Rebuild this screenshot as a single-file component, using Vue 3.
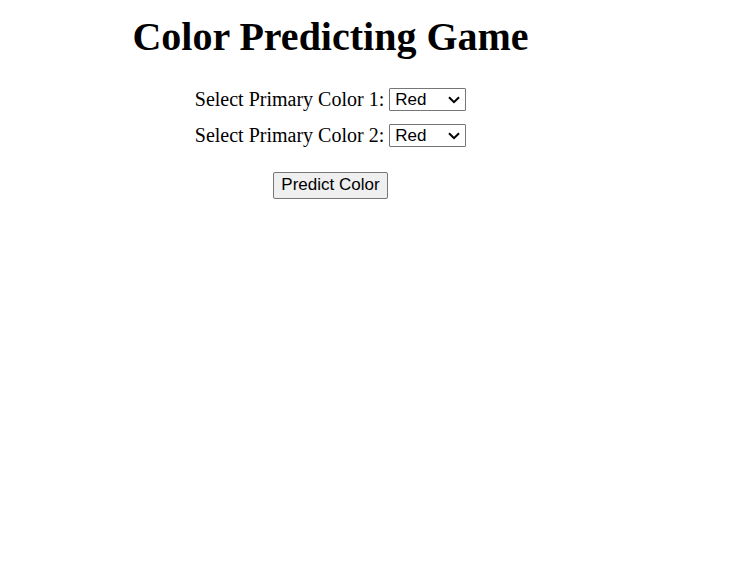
<script setup>
import { ref } from 'vue'

const colors = ['Red', 'Blue', 'Yellow']
const first = ref('Red')
const second = ref('Red')
const result = ref('')

const mixes = {
  'Blue-Red': 'Purple',
  'Red-Yellow': 'Orange',
  'Blue-Yellow': 'Green',
}

function predict() {
  const key = [first.value, second.value].sort().join('-')
  result.value = mixes[key] || first.value
}
</script>

<template>
  <main class="game">
    <h1 class="title">Color Predicting Game</h1>
    <form class="form" @submit.prevent="predict">
      <div class="field">
        <label for="color1">Select Primary Color 1:</label>
        <span class="picker">
          <select id="color1" v-model="first" class="control select">
            <option v-for="c in colors" :key="c">{{ c }}</option>
          </select>
          <svg class="chevron" viewBox="0 0 12 8" aria-hidden="true"><path d="M1 1.2 6 6.2 11 1.2" /></svg>
        </span>
      </div>
      <div class="field">
        <label for="color2">Select Primary Color 2:</label>
        <span class="picker">
          <select id="color2" v-model="second" class="control select">
            <option v-for="c in colors" :key="c">{{ c }}</option>
          </select>
          <svg class="chevron" viewBox="0 0 12 8" aria-hidden="true"><path d="M1 1.2 6 6.2 11 1.2" /></svg>
        </span>
      </div>
      <button type="submit" class="control button">Predict Color</button>
    </form>
    <p v-if="result" class="result">{{ result }}</p>
  </main>
</template>

<style>
body {
  margin: 0;
  background: #fff;
}
</style>

<style scoped>
.game {
  display: flex;
  flex-direction: column;
  align-items: center;
  padding: 14px 85px 0 0;
  color: #000;
  font-family: "Liberation Serif", "Times New Roman", serif;
  font-size: 20px;
  line-height: 23px;
}
.title {
  margin: 0;
  font-size: 40px;
  line-height: 46px;
}
.form {
  display: flex;
  flex-direction: column;
  align-items: center;
  gap: 13px;
  padding-top: 28px;
}
.field {
  display: flex;
  align-items: center;
  gap: 5px;
}
.control {
  box-sizing: border-box;
  border: 1px solid #767676;
  color: #000;
  font-family: "Liberation Sans", Arial, sans-serif;
  font-size: 17px;
}
.picker {
  display: grid;
  align-items: center;
}
.select {
  grid-area: 1 / 1;
  width: 77px;
  height: 23px;
  padding: 0 20px 0 5px;
  background: #fff;
  border-radius: 1px;
  appearance: none;
}
.chevron {
  grid-area: 1 / 1;
  justify-self: end;
  width: 12px;
  height: 8px;
  margin-right: 6px;
  fill: none;
  stroke: #000;
  stroke-width: 2;
  pointer-events: none;
}
.button {
  width: 115px;
  height: 27px;
  margin-top: 12px;
  padding: 0 0 2px;
  background: #efefef;
  border-radius: 2px;
}
</style>
